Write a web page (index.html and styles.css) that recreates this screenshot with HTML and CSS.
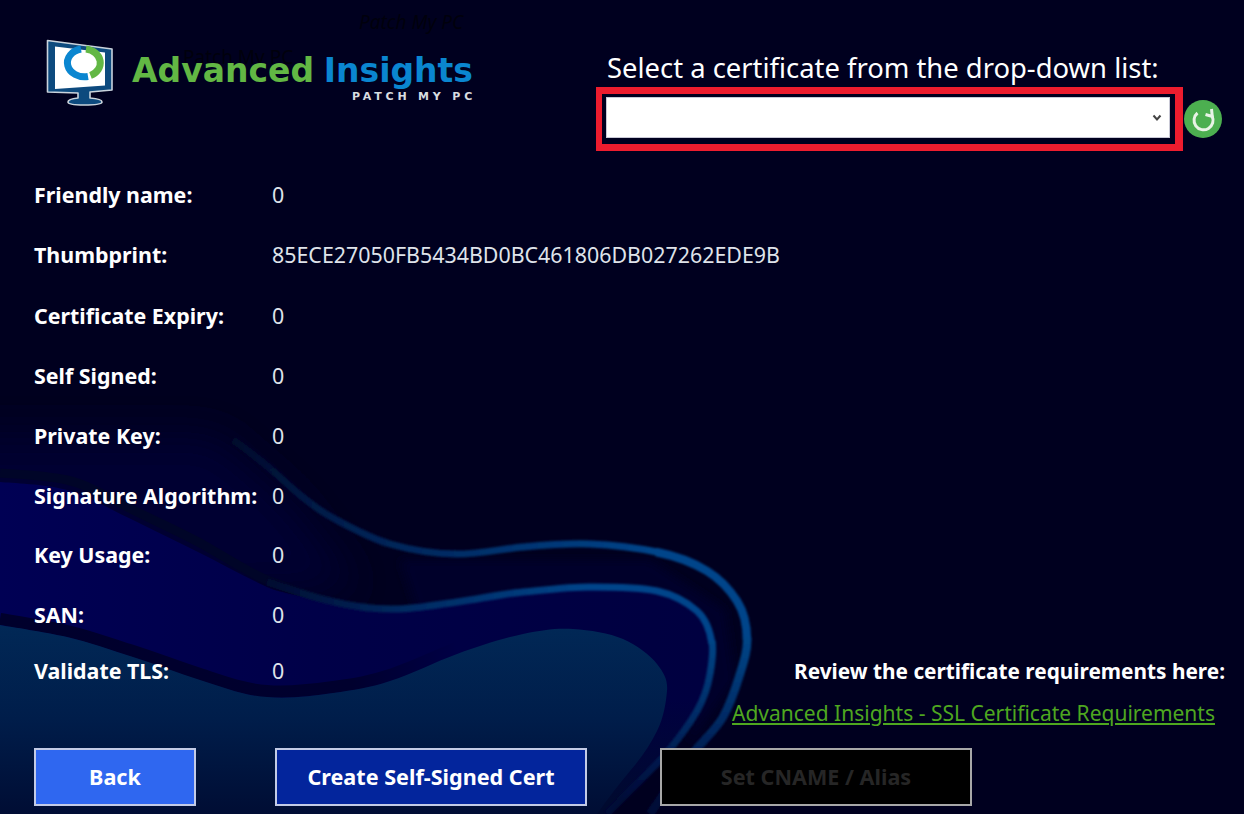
FILE: index.html
```html
<!DOCTYPE html>
<html lang="en">
<head>
<meta charset="utf-8">
<title>Advanced Insights - Certificate</title>
<link rel="stylesheet" href="styles.css">
</head>
<body>
<div class="app">
  <svg class="backdrop" viewBox="0 0 1244 814" preserveAspectRatio="none" aria-hidden="true">
    <defs>
      <filter id="soft-wide" x="-30%" y="-30%" width="160%" height="160%"><feGaussianBlur stdDeviation="20"/></filter>
      <filter id="soft-mid" x="-10%" y="-10%" width="120%" height="120%"><feGaussianBlur stdDeviation="5"/></filter>
      <filter id="soft-edge" x="-5%" y="-5%" width="110%" height="110%"><feGaussianBlur stdDeviation="0.8"/></filter>
      <linearGradient id="navy" x1="0" y1="0" x2="700" y2="0" gradientUnits="userSpaceOnUse">
        <stop offset="0" stop-color="#000054"/>
        <stop offset="0.45" stop-color="#000048"/>
        <stop offset="1" stop-color="#000040"/>
      </linearGradient>
      <linearGradient id="navyfade" x1="0" y1="700" x2="0" y2="800" gradientUnits="userSpaceOnUse">
        <stop offset="0" stop-color="#000a30" stop-opacity="0"/>
        <stop offset="1" stop-color="#000a30"/>
      </linearGradient>
      <linearGradient id="blob" x1="0" y1="625" x2="0" y2="814" gradientUnits="userSpaceOnUse">
        <stop offset="0" stop-color="#012856"/>
        <stop offset="0.5" stop-color="#001d4a"/>
        <stop offset="1" stop-color="#000d34"/>
      </linearGradient>
      <linearGradient id="shadow" x1="0" y1="0" x2="470" y2="0" gradientUnits="userSpaceOnUse">
        <stop offset="0" stop-color="#00002c"/>
        <stop offset="0.75" stop-color="#00002e"/>
        <stop offset="1" stop-color="#000048"/>
      </linearGradient>
      <linearGradient id="band-a" x1="233" y1="0" x2="657" y2="0" gradientUnits="userSpaceOnUse">
        <stop offset="0" stop-color="#000a2c"/>
        <stop offset="0.25" stop-color="#011f4e"/>
        <stop offset="0.55" stop-color="#022e68"/>
        <stop offset="1" stop-color="#03458a"/>
      </linearGradient>
      <linearGradient id="band-b" x1="267" y1="0" x2="590" y2="0" gradientUnits="userSpaceOnUse">
        <stop offset="0" stop-color="#000a30"/>
        <stop offset="0.4" stop-color="#01285e"/>
        <stop offset="1" stop-color="#03458a"/>
      </linearGradient>
      <linearGradient id="band-down" x1="0" y1="640" x2="0" y2="800" gradientUnits="userSpaceOnUse">
        <stop offset="0" stop-color="#034586"/>
        <stop offset="0.5" stop-color="#012a64"/>
        <stop offset="1" stop-color="#000a38"/>
      </linearGradient>
    </defs>
    <path fill="#000030" filter="url(#soft-wide)" d="M-80 435H215L290 500L360 590L-80 600Z"/>
    <path fill="#00002a" filter="url(#soft-mid)" d="M400 560H650L725 610L735 680L690 745L700 640L650 595L420 620Z"/>
    <path fill="none" stroke="#000528" stroke-width="9" d="M0 473C11 474 45 475 67 480C89 485 111 499 133 510C155 521 178 531 200 543C222 555 245 571 267 580C285 587 310 596 330 601"/>
    <path fill="url(#navy)" d="M0 482C11 483 45 484 67 490C89 496 111 510 133 520C155 531 178 542 200 553C222 564 245 577 267 587C282 594 309 597 330 601C350 605 369 609 390 609C411 610 435 605 457 602C479 599 501 594 523 592C545 590 568 587 590 587C612 587 639 587 657 591C675 595 688 603 697 611C706 619 710 630 712 641C714 652 712 662 710 674C708 686 705 697 697 711C689 725 678 740 663 757C648 774 625 795 607 814L0 814Z"/>
    <path fill="url(#navyfade)" d="M0 700H704L697 711C689 725 678 740 663 757C648 774 625 795 607 814L0 814Z"/>
    <path fill="none" stroke="url(#shadow)" stroke-width="12" d="M0 619C11 621 45 626 67 631C89 636 111 644 133 651C155 658 178 667 200 674C222 681 245 690 267 691C289 693 312 690 333 687C354 684 369 682 390 675C412 668 435 656 457 648"/>
    <path fill="url(#blob)" d="M0 625C11 627 45 632 67 637C89 642 111 650 133 657C155 664 178 673 200 680C222 687 245 696 267 697C289 699 312 696 333 693C354 690 369 688 390 681C412 674 435 662 457 654C479 646 504 638 523 634C542 630 556 628 573 629C590 630 609 633 623 639C637 645 650 655 657 664C664 673 668 680 667 691C666 702 664 717 657 731C650 745 642 757 630 771C618 785 607 800 597 814L0 814Z"/>
    <g filter="url(#soft-edge)" fill="none">
      <path stroke="url(#band-a)" stroke-width="7" d="M233 440C239 444 256 457 267 466C278 475 289 486 300 495C311 504 318 510 333 518C348 526 369 538 390 544C411 550 435 554 457 554C479 554 501 549 523 547C545 545 568 543 590 544C612 545 637 548 657 552"/>
      <path stroke="#03458a" stroke-width="8.500" d="M656 552C676 556 694 563 707 571C720 579 730 590 737 601C744 612 747 625 747 640"/>
      <path stroke="url(#band-down)" stroke-width="8.500" d="M747 637C748 649 744 661 740 674C736 687 731 703 723 717C715 731 702 741 690 757C679 773 663 795 650 814"/>
      <path stroke="url(#band-b)" stroke-width="7" d="M267 582C278 585 310 597 330 601C350 606 369 609 390 609C411 610 435 605 457 602C479 599 501 594 523 592C545 590 568 587 590 587C612 587 639 587 657 591C675 595 688 603 697 611C706 619 710 630 712 644"/>
      <path stroke="url(#band-down)" stroke-width="7" d="M712 641C714 652 712 662 710 674C708 686 705 697 697 711C689 725 678 740 663 757C648 774 625 795 607 814"/>
    </g>
  </svg>

  <span class="ghost ghost-top">Patch My PC</span>
  <span class="ghost ghost-mid">Patch My PC</span>

  <header class="top">
    <div class="brand">
      <svg class="monitor" viewBox="0 0 68 68" aria-hidden="true">
        <path fill="#0d4a7e" stroke="#c9d3dc" stroke-width="1.600" stroke-linejoin="round" d="M1.500 2.500L66 11V52L44 54V60C51 60.500 56 62 56 64C56 66.500 46 67 38 67C28 67 22 66.500 22 64C22 62 27 60.500 32 60V55L1.500 54Z"/>
        <path fill="#ffffff" d="M9 8.500L59 14.500V47.500L9 51Z"/>
        <path fill="none" stroke="#0a86d0" stroke-width="7" d="M35 11A17 14 0 1 0 42 38.500"/>
        <path fill="none" stroke="#62b744" stroke-width="7" d="M40 11A17 14 0 0 1 44.500 37.500"/>
      </svg>
      <div class="wordmark">
        <div class="wordmark-name"><span class="word-green">Advanced</span><span class="word-blue">Insights</span></div>
        <div class="wordmark-sub">PATCH MY PC</div>
      </div>
    </div>
    <div class="picker">
      <div class="picker-title">Select a certificate from the drop-down list:</div>
      <div class="picker-row">
        <div class="select-frame">
          <div class="select-box" role="combobox" aria-expanded="false">
            <svg class="chevron" viewBox="0 0 10 8" aria-hidden="true"><path d="M1.500 1.500L5 5.500L8.500 1.500" fill="none" stroke="#444" stroke-width="2"/></svg>
          </div>
        </div>
        <button class="refresh" type="button" aria-label="Refresh">
          <svg viewBox="0 0 38 38" aria-hidden="true">
            <path d="M13.500 13A9.500 9.500 0 1 0 28 16" fill="none" stroke="#e8f3e6" stroke-width="3"/>
            <path d="M27.500 9L28.300 16.500L21.500 14.500" fill="none" stroke="#e8f3e6" stroke-width="3"/>
          </svg>
        </button>
      </div>
    </div>
  </header>

  <dl class="details">
    <dt>Friendly name:</dt><dd>0</dd>
    <dt>Thumbprint:</dt><dd>85ECE27050FB5434BD0BC461806DB027262EDE9B</dd>
    <dt>Certificate Expiry:</dt><dd>0</dd>
    <dt>Self Signed:</dt><dd>0</dd>
    <dt>Private Key:</dt><dd>0</dd>
    <dt>Signature Algorithm:</dt><dd>0</dd>
    <dt>Key Usage:</dt><dd>0</dd>
    <dt>SAN:</dt><dd>0</dd>
    <dt>Validate TLS:</dt><dd>0</dd>
  </dl>

  <div class="requirements">
    <div class="req-title">Review the certificate requirements here:</div>
    <a class="req-link" href="#">Advanced Insights - SSL Certificate Requirements</a>
  </div>

  <footer class="actions">
    <button class="btn btn-back" type="button">Back</button>
    <button class="btn btn-create" type="button">Create Self-Signed Cert</button>
    <button class="btn btn-disabled" type="button" disabled>Set CNAME / Alias</button>
  </footer>
</div>
</body>
</html>
```

FILE: styles.css
```css
* { box-sizing: border-box; }
html, body { margin: 0; padding: 0; }
body { background: #00001f; }

.app {
  position: relative;
  width: 1244px;
  height: 814px;
  overflow: hidden;
  background: #00001f;
  color: #fff;
  font-family: "Noto Sans", "Open Sans", sans-serif;
  display: flex;
  flex-direction: column;
}
.backdrop { position: absolute; inset: 0; width: 100%; height: 100%; }
.ghost { position: absolute; color: #00000c; font-size: 19px; white-space: nowrap; }
.ghost-top { left: 359px; top: 9px; font-style: italic; }
.ghost-mid { left: 183px; top: 44px; }

.top {
  position: relative;
  height: 164px;
  display: flex;
  justify-content: space-between;
  padding: 38px 22px 0 46px;
}
.brand { display: flex; align-items: flex-start; gap: 18px; }
.monitor { width: 68px; height: 68px; flex: none; }
.wordmark { width: 341px; padding-top: 15px; }
.wordmark-name {
  display: flex;
  justify-content: space-between;
  font-family: "DejaVu Sans", sans-serif;
  font-weight: 700;
  font-size: 33px;
  line-height: 36px;
}
.word-green { color: #62b744; }
.word-blue { color: #0a86d0; }
.wordmark-sub {
  text-align: right;
  color: #d8dce0;
  font-family: "DejaVu Sans", sans-serif;
  font-weight: 700;
  font-size: 11px;
  letter-spacing: 3.800px;
  line-height: 14px;
  margin-right: -3px;
  margin-top: 1px;
}
.picker { display: flex; flex-direction: column; padding-top: 11px; }
.picker-title { font-size: 27.400px; line-height: 38px; padding-left: 11px; white-space: nowrap; }
.picker-row { display: flex; align-items: center; gap: 1px; }
.select-frame {
  width: 587px;
  height: 64px;
  border: solid #ed1c2e;
  border-width: 7px 8px 7px 6px;
  padding: 3px 5px 6px 4px;
}
.select-box {
  height: 100%;
  background: #fff;
  border: 1px solid #c9c9d6;
  display: flex;
  align-items: center;
  justify-content: flex-end;
  padding-right: 7px;
}
.chevron { width: 10px; height: 8px; }
.refresh {
  width: 38px;
  height: 38px;
  padding: 0;
  border: 0;
  border-radius: 50%;
  background: #4caf50;
}
.refresh svg { display: block; width: 38px; height: 38px; }

.details {
  position: relative;
  margin: 0;
  padding-left: 34px;
  display: grid;
  grid-template-columns: 238px 1fr;
  grid-template-rows: 60px 61px 60px 60px 60px 60px 59px 60px 52px;
  align-items: center;
  font-size: 21.400px;
}
.details dt { font-weight: 700; }
.details dd { margin: 0; color: #dfe3ea; }

.requirements {
  position: absolute;
  right: 19px;
  top: 656px;
  display: flex;
  flex-direction: column;
  align-items: flex-end;
  gap: 12px;
  font-size: 21px;
  line-height: 30px;
}
.req-title { font-weight: 700; font-size: 20.800px; }
.req-link { color: #4ea71f; margin-right: 10px; }

.actions {
  position: absolute;
  left: 34px;
  top: 748px;
  display: flex;
  gap: 79px;
}
.btn {
  height: 58px;
  border: 2px solid #c3cbe6;
  font: 700 21.600px "Noto Sans", "Open Sans", sans-serif;
  color: #fff;
  padding: 0 0 1px;
}
.btn-back { width: 162px; background: #2f67f0; }
.btn-create { width: 312px; background: #03259c; }
.btn-disabled { width: 312px; margin-left: -6px; background: #000; color: #262626; border-color: #a8a8a8; }
```
